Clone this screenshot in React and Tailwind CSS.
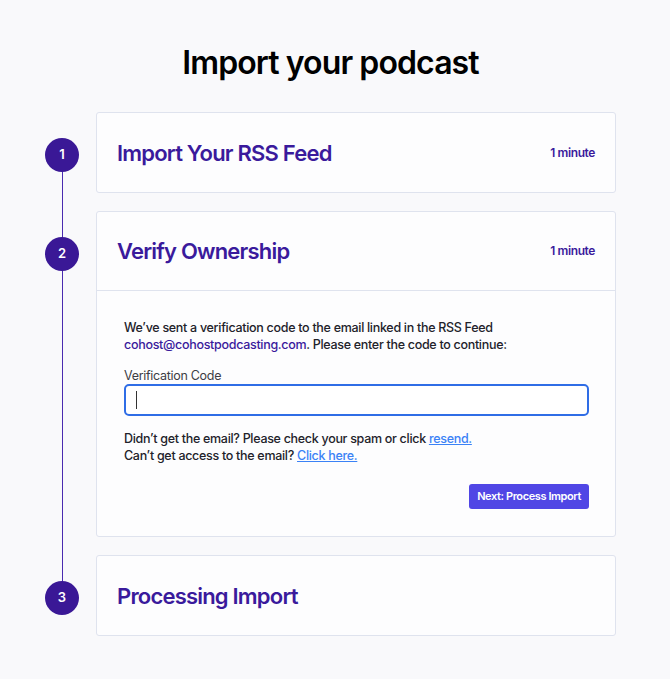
import React from "react";

const font = { fontFamily: "Inter, 'Noto Sans', sans-serif" };

function StepCircle({ n }) {
  return (
    <div className="w-[34px] h-[34px] shrink-0 mt-[26px] rounded-full bg-[#3a1896] text-white text-[13px] font-semibold flex items-center justify-center z-10">
      {n}
    </div>
  );
}

function StepHeader({ title, time, bordered }) {
  return (
    <div
      className={
        "h-[79px] px-5 flex items-center justify-between" +
        (bordered ? " border-b border-[#dfe3ee]" : "")
      }
    >
      <h2 className="pt-px text-[22px] font-semibold text-[#3a1a9c] tracking-[-0.8px]">{title}</h2>
      {time && (
        <span className="text-[12px] font-semibold text-[#3a1a9c] tracking-[-0.4px]">{time}</span>
      )}
    </div>
  );
}

export default function App() {
  return (
    <div className="min-h-[679px] bg-[#f9f9fb] text-[#22222a]" style={font}>
      <h1 className="pt-[39px] pr-[9px] text-center text-[32px] font-semibold text-black tracking-[-0.9px] leading-[48px]">
        Import your podcast
      </h1>

      <div className="relative mt-[25px] ml-[45px] mr-[54px] flex flex-col gap-[18px]">
        {/* timeline line */}
        <div className="absolute left-[16.5px] top-[43px] bottom-[39px] w-px bg-[#4a2bb0]" />

        {/* Step 1 */}
        <div className="flex gap-[17px]">
          <StepCircle n={1} />
          <div className="flex-1 bg-[#fdfdfe] border border-[#dfe3ee] rounded-[3px]">
            <StepHeader title="Import Your RSS Feed" time="1 minute" />
          </div>
        </div>

        {/* Step 2 */}
        <div className="flex gap-[17px]">
          <StepCircle n={2} />
          <div className="flex-1 bg-[#fdfdfe] border border-[#dfe3ee] rounded-[3px]">
            <StepHeader title="Verify Ownership" time="1 minute" bordered />
            <div className="pl-[27px] pr-[26px] pt-[28px] pb-[27px] text-[12.5px] leading-[17px] font-medium tracking-[-0.3px]">
              <p>
                We’ve sent a verification code to the email linked in the RSS Feed{" "}
                <span className="text-[#3a1a9c]">cohost@cohostpodcasting.com</span>. Please enter
                the code to continue:
              </p>
              <label className="block mt-[14px] text-[#3d3d45] font-normal">Verification Code</label>
              <div className="h-[32px] border-2 border-[#2f6de6] rounded-[5px] bg-white flex items-center pl-[10px]">
                <span className="w-px h-[18px] bg-[#333]" />
              </div>
              <p className="mt-[14px]">
                Didn’t get the email? Please check your spam or click{" "}
                <a href="#" className="text-[#3b82f6] underline">resend.</a>
                <br />
                Can’t get access to the email?{" "}
                <a href="#" className="text-[#3b82f6] underline">Click here.</a>
              </p>
              <div className="mt-[20px] flex justify-end">
                <button className="h-[25px] px-[8px] rounded-[3px] bg-[#5046e5] text-white text-[11px] font-semibold tracking-[-0.4px]">
                  Next: Process Import
                </button>
              </div>
            </div>
          </div>
        </div>

        {/* Step 3 */}
        <div className="flex gap-[17px]">
          <StepCircle n={3} />
          <div className="flex-1 bg-[#fdfdfe] border border-[#dfe3ee] rounded-[3px]">
            <StepHeader title="Processing Import" />
          </div>
        </div>
      </div>
    </div>
  );
}
